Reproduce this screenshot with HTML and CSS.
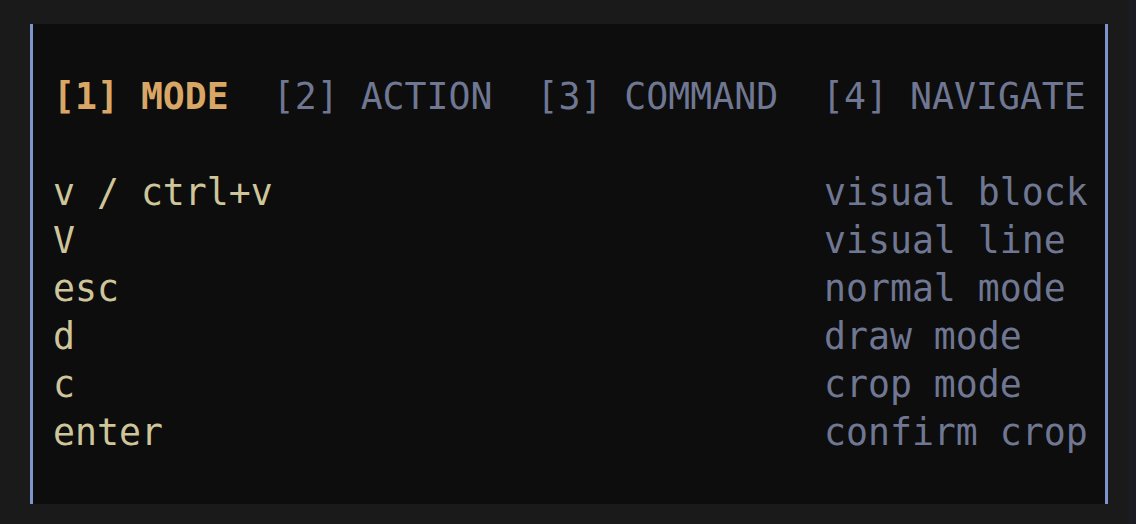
FILE: index.html
```html
<!DOCTYPE html>
<html>
<head>
<meta charset="utf-8">
<link rel="stylesheet" href="styles.css">
</head>
<body>
<div class="screen">
  <div class="panel">
    <div class="tabs">
      <span class="tab active">[1] MODE</span>
      <span class="tab">[2] ACTION</span>
      <span class="tab">[3] COMMAND</span>
      <span class="tab">[4] NAVIGATE</span>
    </div>
    <div class="rows">
      <div class="row"><span class="key">v / ctrl+v</span><span class="desc">visual block</span></div>
      <div class="row"><span class="key">V</span><span class="desc">visual line</span></div>
      <div class="row"><span class="key">esc</span><span class="desc">normal mode</span></div>
      <div class="row"><span class="key">d</span><span class="desc">draw mode</span></div>
      <div class="row"><span class="key">c</span><span class="desc">crop mode</span></div>
      <div class="row"><span class="key">enter</span><span class="desc">confirm crop</span></div>
    </div>
  </div>
  <div class="strip"></div>
</div>
</body>
</html>
```

FILE: styles.css
```css
html, body {
  margin: 0;
  padding: 0;
  background: #1b1a1a;
}
.screen {
  display: flex;
  width: 1136px;
  height: 524px;
  overflow: hidden;
}
.panel {
  margin: 24px 0 0 30px;
  width: 1078px;
  height: 480px;
  box-sizing: border-box;
  padding: 49px 0 47px 20px;
  border-left: 3px solid #7e94cd;
  border-right: 3px solid #7e94cd;
  background: #0d0d0d;
  font-family: "DejaVu Sans Mono", monospace;
  font-size: 36.5px;
  line-height: 48px;
}
.strip {
  margin-left: 21px;
  width: 7px;
  background: #1b1d24;
}
.tabs {
  display: flex;
  gap: 2ch;
  margin-bottom: 48px;
  white-space: pre;
}
.tab {
  color: #6f7792;
}
.tab.active {
  color: #d8a766;
  font-weight: bold;
}
.row {
  display: flex;
  white-space: pre;
}
.key {
  width: 771px;
  flex: none;
  color: #cfc59b;
}
.desc {
  color: #6f7792;
}
```
